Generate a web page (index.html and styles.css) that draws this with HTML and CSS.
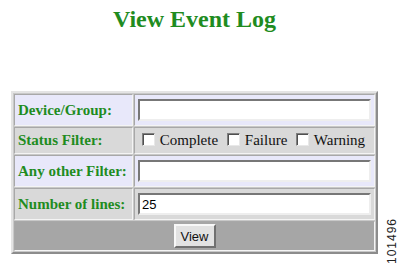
FILE: index.html
```html
<!DOCTYPE html>
<html lang="en">
<head>
    <meta charset="UTF-8">
    <title>View Event Log</title>
    <link rel="stylesheet" href="styles.css">
</head>
<body>
    <div class="page">
        <div class="main">
            <h1>View Event Log</h1>
            <table class="filters">
                <tr class="light">
                    <td class="label">Device/Group:</td>
                    <td class="field"><input type="text" class="text"></td>
                </tr>
                <tr class="gray">
                    <td class="label">Status Filter:</td>
                    <td class="field checks"><label><input type="checkbox" class="box"> Complete</label><label><input type="checkbox" class="box"> Failure</label><label><input type="checkbox" class="box"> Warning</label></td>
                </tr>
                <tr class="light">
                    <td class="label">Any other Filter:</td>
                    <td class="field"><input type="text" class="text"></td>
                </tr>
                <tr class="gray">
                    <td class="label">Number of lines:</td>
                    <td class="field"><input type="text" class="text" value="25"></td>
                </tr>
                <tr class="dark">
                    <td colspan="2" class="actions"><button>View</button></td>
                </tr>
            </table>
        </div>
        <div class="side">
            <span class="fig">101496</span>
        </div>
    </div>
</body>
</html>
```

FILE: styles.css
```css
body {
    margin: 0;
    background-color: white;
    font-family: "Liberation Serif", "Times New Roman", serif;
}
.page {
    display: flex;
    width: 402px;
    height: 267px;
}
.main {
    margin-left: 11px;
    width: 367px;
}
h1 {
    margin: 6px 0 58px;
    font-size: 24px;
    line-height: 27px;
    text-align: center;
    color: #1f8c1f;
}
.filters {
    width: 367px;
    border-collapse: separate;
    border-spacing: 1px;
    border: 2px solid;
    border-color: #e4e4e4 #8c8c8c #8c8c8c #e4e4e4;
    background-color: #c8c8c8;
}
.filters td {
    border: 1px solid;
    border-color: #a8a8a8 #f4f4f4 #f4f4f4 #a8a8a8;
    padding: 4px 3px;
    font-size: 15px;
    line-height: 17px;
}
.light td {
    background-color: #e8e8fa;
}
.gray td {
    background-color: #d9d9d9;
}
.dark td {
    background-color: #a6a6a6;
}
.label {
    width: 114px;
    font-weight: bold;
    color: #1f8c1f;
    white-space: nowrap;
}
.text {
    display: block;
    box-sizing: border-box;
    width: 233px;
    height: 22px;
    margin: 0;
    padding: 1px 2px;
    border: 2px solid;
    border-color: #777 #eee #eee #777;
    background: white;
    font-family: "Liberation Sans", Arial, sans-serif;
    font-size: 13px;
}
.filters .checks {
    white-space: nowrap;
    padding-top: 3px;
    padding-bottom: 3px;
}
.checks label {
    margin-right: 5px;
    color: #111;
}
.box {
    appearance: none;
    width: 13px;
    height: 13px;
    margin: 0 1px 0 4px;
    vertical-align: -1px;
    border: 1px solid;
    border-color: #808080 #e8e8e8 #e8e8e8 #808080;
    box-shadow: inset 1px 1px 0 #505050;
    background: white;
}
.filters .actions {
    text-align: center;
    padding: 2px;
}
button {
    width: 42px;
    height: 24px;
    padding: 0;
    border: 2px solid;
    border-color: #f8f8f8 #707070 #707070 #f8f8f8;
    background-color: #e2e2e2;
    font-family: "Liberation Sans", Arial, sans-serif;
    font-size: 13px;
    color: #111;
}
.side {
    flex: 1;
    display: flex;
    justify-content: flex-end;
    align-items: flex-end;
    padding: 0 3px 3px 0;
}
.fig {
    writing-mode: vertical-rl;
    transform: rotate(180deg);
    font-family: "Liberation Sans", Arial, sans-serif;
    font-size: 12px;
    letter-spacing: 1px;
    color: #222;
}
```
